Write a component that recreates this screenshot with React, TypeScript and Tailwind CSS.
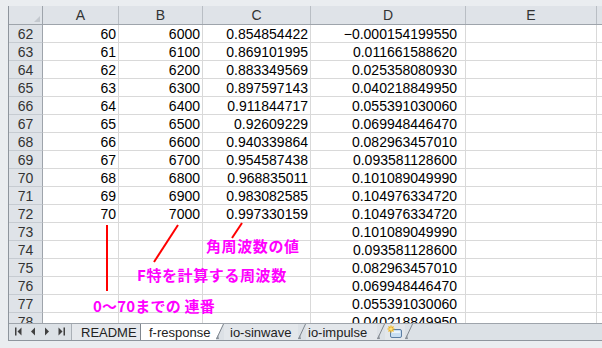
import React from "react";

const colWidths = [76, 84, 108, 155, 131];
const colNames = ["A", "B", "C", "D", "E"];

type Row = { n: number; a?: string; b?: string; c?: string; d?: string };

const rows: Row[] = [
  { n: 62, a: "60", b: "6000", c: "0.854854422", d: "\u22120.000154199550" },
  { n: 63, a: "61", b: "6100", c: "0.869101995", d: "0.011661588620" },
  { n: 64, a: "62", b: "6200", c: "0.883349569", d: "0.025358080930" },
  { n: 65, a: "63", b: "6300", c: "0.897597143", d: "0.040218849950" },
  { n: 66, a: "64", b: "6400", c: "0.911844717", d: "0.055391030060" },
  { n: 67, a: "65", b: "6500", c: "0.92609229", d: "0.069948446470" },
  { n: 68, a: "66", b: "6600", c: "0.940339864", d: "0.082963457010" },
  { n: 69, a: "67", b: "6700", c: "0.954587438", d: "0.093581128600" },
  { n: 70, a: "68", b: "6800", c: "0.968835011", d: "0.101089049990" },
  { n: 71, a: "69", b: "6900", c: "0.983082585", d: "0.104976334720" },
  { n: 72, a: "70", b: "7000", c: "0.997330159", d: "0.104976334720" },
  { n: 73, d: "0.101089049990" },
  { n: 74, d: "0.093581128600" },
  { n: 75, d: "0.082963457010" },
  { n: 76, d: "0.069948446470" },
  { n: 77, d: "0.055391030060" },
  { n: 78, d: "0.040218849950" },
];

function Slant({ active = false }: { active?: boolean }) {
  return (
    <svg width="8" height="15" viewBox="0 0 8 15" className="shrink-0 block">
      {active && <polygon points="0,0 7,0 0,15" fill="#ffffff" />}
      <line x1="0.5" y1="15" x2="7.5" y2="0" stroke="#7f868e" strokeWidth="1" />
      <polygon points="0,15 2,11 3,15" fill="#8a9199" />
    </svg>
  );
}

export default function App() {
  return (
    <div
      className="relative w-[602px] h-[348px] overflow-hidden bg-[#eaedf0] pl-[8px] pt-[6px] pb-[7px] flex flex-col"
      style={{ fontFamily: '"Liberation Sans", Arial, sans-serif' }}
    >
      <div className="flex-1 flex flex-col border-l border-b border-[#8e959d] bg-white min-h-0">
        {/* grid area */}
        <div className="h-[318px] overflow-hidden flex flex-col">
          {/* header row */}
          <div className="flex h-[19px] shrink-0 bg-[#dfe3e8] border-b border-[#9ea4ab]">
            <div className="w-[34px] shrink-0 border-r border-[#9ea4ab]">
              <svg width="33" height="18" className="block">
                <polygon points="31,10 31,16 25,16" fill="#c3c8ce" />
              </svg>
            </div>
            {colNames.map((c, i) => (
              <div
                key={c}
                className="shrink-0 border-r border-[#b9bec4] flex items-center justify-center text-[14px] text-[#333] leading-none"
                style={{ width: colWidths[i] }}
              >
                {c}
              </div>
            ))}
            <div className="flex-1" />
          </div>
          {rows.map((r) => (
            <div key={r.n} className="flex h-[18px] shrink-0 text-[14px] leading-none">
              <div className="w-[34px] shrink-0 bg-[#dfe3e8] border-r border-r-[#9ea4ab] border-b border-b-[#c6cbd1] flex items-center justify-center text-[#333]">
                {r.n}
              </div>
              <div className="w-[76px] shrink-0 border-r border-b border-[#d9d9d9] flex items-center justify-end pr-[2px] text-black">
                {r.a}
              </div>
              <div className="w-[84px] shrink-0 border-r border-b border-[#d9d9d9] flex items-center justify-end pr-[2px] text-black">
                {r.b}
              </div>
              <div className="w-[108px] shrink-0 border-r border-b border-[#d9d9d9] flex items-center justify-end pr-[2px] text-black">
                {r.c}
              </div>
              <div className="w-[155px] shrink-0 border-r border-b border-[#d9d9d9] flex items-center justify-end pr-[8px] text-black">
                {r.d}
              </div>
              <div className="w-[131px] shrink-0 border-r border-b border-[#d9d9d9]" />
              <div className="flex-1 border-b border-[#d9d9d9]" />
            </div>
          ))}
        </div>
        {/* tab bar */}
        <div className="h-[17px] shrink-0 border-t border-[#9ea4ab] bg-[#dce1e6] flex text-[13px] text-[#222] leading-none">
          <div className="w-[63px] shrink-0 border-r border-[#aab0b7]">
            <svg width="62" height="15" viewBox="0 0 62 15" className="block">
              <g fill="#404040">
                <rect x="6" y="3.5" width="1.5" height="8" />
                <polygon points="12.5,3.5 8.5,7.5 12.5,11.5" />
                <polygon points="26,3.5 22,7.5 26,11.5" />
                <polygon points="36,3.5 40,7.5 36,11.5" />
                <polygon points="49.5,3.5 53.5,7.5 49.5,11.5" />
                <rect x="54.5" y="3.5" width="1.5" height="8" />
              </g>
            </svg>
          </div>
          <div className="w-[69px] shrink-0 bg-[#e5e8ec] border-r border-[#7f868e] flex items-center pl-[9px]">
            README
          </div>
          <div className="w-[75px] shrink-0 bg-white flex items-center pl-[8px]">
            f-response
          </div>
          <Slant active />
          <div className="w-[74px] shrink-0 bg-[#e3e7eb] flex items-center pl-[6px]">
            io-sinwave
          </div>
          <Slant />
          <div className="w-[71px] shrink-0 bg-[#e3e7eb] flex items-center pl-[2px]">
            io-impulse
          </div>
          <Slant />
          <div className="w-[20px] shrink-0 bg-[#e3e7eb] flex items-center justify-center">
            <svg width="16" height="14" viewBox="0 0 16 14" className="block">
              <rect x="3.5" y="4.5" width="11" height="8" rx="1.5" fill="#c8def2" stroke="#5c7ea3" strokeWidth="1" />
              <rect x="5" y="6" width="8" height="2" fill="#eaf3fb" />
              <g stroke="#f2b51e" strokeWidth="1.2">
                <line x1="4" y1="0.5" x2="4" y2="7.5" />
                <line x1="0.5" y1="4" x2="7.5" y2="4" />
                <line x1="1.5" y1="1.5" x2="6.5" y2="6.5" />
                <line x1="6.5" y1="1.5" x2="1.5" y2="6.5" />
              </g>
              <circle cx="4" cy="4" r="1.6" fill="#ffe27a" />
            </svg>
          </div>
          <Slant />
          <div className="flex-1" />
        </div>
      </div>

      {/* annotations */}
      <svg
        width="602"
        height="348"
        className="absolute left-0 top-0 pointer-events-none"
      >
        <rect x="106" y="225" width="2" height="66" fill="#ff0000" />
        <line x1="178" y1="225" x2="154" y2="262" stroke="#ff0000" strokeWidth="2" />
        <line x1="242" y1="223" x2="232" y2="238" stroke="#ff0000" strokeWidth="2" />
      </svg>
      <div
        className="absolute left-[206px] top-[238px] text-[15px] leading-[15px] font-bold tracking-[0.6px] text-[#ff00ff] whitespace-nowrap"
        style={{ fontFamily: '"Noto Sans CJK JP", sans-serif' }}
      >
        角周波数の値
      </div>
      <div
        className="absolute left-[137px] top-[267px] text-[15px] leading-[15px] font-bold tracking-[0.6px] text-[#ff00ff] whitespace-nowrap"
        style={{ fontFamily: '"Noto Sans CJK JP", sans-serif' }}
      >
        F特を計算する周波数
      </div>
      <div
        className="absolute left-[93px] top-[298px] text-[15px] leading-[15px] font-bold tracking-[0.2px] text-[#ff00ff] whitespace-nowrap"
        style={{ fontFamily: '"Noto Sans CJK JP", sans-serif' }}
      >
        0〜70までの 連番
      </div>
    </div>
  );
}
